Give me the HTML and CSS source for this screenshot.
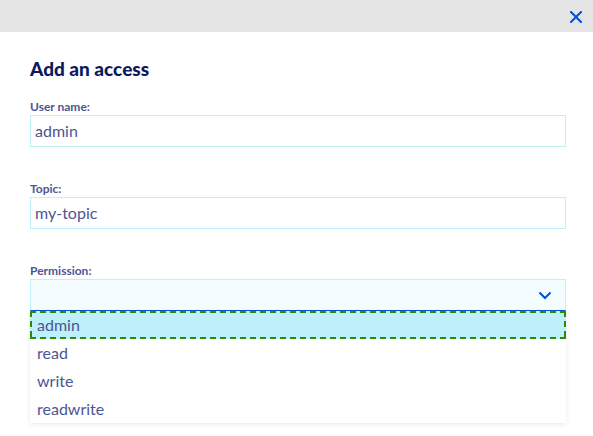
FILE: index.html
```html
<!DOCTYPE html>
<html lang="en">
<head>
<meta charset="utf-8">
<title>Add an access</title>
<link rel="stylesheet" href="styles.css">
</head>
<body>
<div class="modal">
  <div class="modal-bar">
    <button class="close" aria-label="Close">
      <svg width="12" height="12" viewBox="0 0 12 12"><path d="M1 1L11 11M11 1L1 11" stroke="#0050d7" stroke-width="2" fill="none" stroke-linecap="square"/></svg>
    </button>
  </div>
  <div class="modal-body">
    <h2 class="title">Add an access</h2>
    <div class="field">
      <label class="label">User name:</label>
      <div class="input">admin</div>
    </div>
    <div class="field">
      <label class="label">Topic:</label>
      <div class="input">my-topic</div>
    </div>
    <div class="field">
      <label class="label">Permission:</label>
      <div class="select">
        <svg class="chevron" width="14" height="9" viewBox="0 0 14 9"><path d="M1.5 1.5L7 7L12.5 1.5" stroke="#0050d7" stroke-width="2" fill="none"/></svg>
      </div>
      <ul class="options">
        <li class="option active">admin</li>
        <li class="option">read</li>
        <li class="option">write</li>
        <li class="option">readwrite</li>
      </ul>
    </div>
  </div>
</div>
</body>
</html>
```
FILE: styles.css
```css
* { box-sizing: border-box; }
html, body { margin: 0; padding: 0; background: #fff; }
body { font-family: "Lato", "Open Sans", sans-serif; color: #4d5693; }
.modal { width: 593px; height: 436px; overflow: hidden; }
.modal-bar {
  height: 32px;
  background: #e4e4e4;
  display: flex;
  justify-content: flex-end;
  align-items: center;
  padding-right: 11px;
}
.close {
  border: 0; background: none; padding: 0; margin: 0;
  width: 12px; height: 12px; display: flex;
}
.modal-bar .close { margin-top: 1px; }
.modal-body { padding: 25px 27px 0 30px; }
.title {
  margin: 0 0 19px;
  font-size: 19px;
  line-height: 24px;
  font-weight: 900;
  color: #0b1a5e;
}
.field { display: flex; flex-direction: column; margin-bottom: 35px; }
.label {
  font-size: 12px;
  line-height: 14px;
  font-weight: 700;
  color: #4d5693;
  margin-bottom: 1px;
}
.input {
  height: 32px;
  border: 1px solid #bdf0fb;
  padding: 0 4px;
  font-size: 16px;
  line-height: 30px;
  color: #4d5693;
}
.select {
  height: 32px;
  border: 1px solid #bdf0fb;
  border-bottom: 1px solid #0050d7;
  background: #f3fdff;
  display: flex;
  align-items: center;
  justify-content: flex-end;
  padding-right: 13px;
}
.chevron { margin-top: 1px; }
.options {
  list-style: none;
  margin: 0;
  padding: 0;
  background: #fff;
  box-shadow: 0 1px 4px rgba(120, 110, 200, 0.18);
}
.option {
  position: relative;
  height: 28px;
  padding: 0 7px;
  font-size: 16px;
  line-height: 28px;
  color: #4d5693;
}
.option.active { background: #bdf0fb; }
.option.active::after {
  content: "";
  position: absolute;
  inset: 0;
  pointer-events: none;
  background:
    repeating-linear-gradient(90deg, #2e8b00 0 6px, transparent 6px 10px) top left / 100% 2px no-repeat,
    repeating-linear-gradient(90deg, #2e8b00 0 6px, transparent 6px 10px) bottom left / 100% 2px no-repeat,
    repeating-linear-gradient(180deg, #2e8b00 0 6px, transparent 6px 10px) top left / 2px 100% no-repeat,
    repeating-linear-gradient(180deg, #2e8b00 0 6px, transparent 6px 10px) top right / 2px 100% no-repeat;
}
```
